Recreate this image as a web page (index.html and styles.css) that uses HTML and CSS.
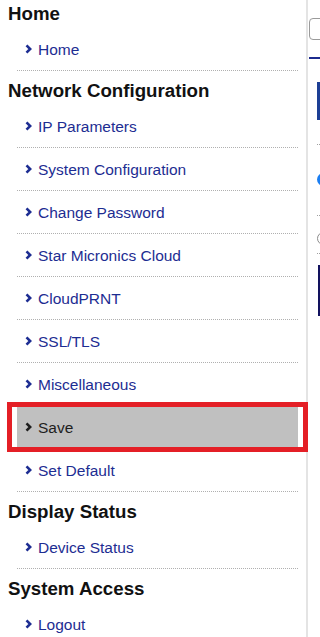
FILE: index.html
```html
<!DOCTYPE html>
<html lang="en">
<head>
    <meta charset="UTF-8">
    <meta name="viewport" content="width=device-width, initial-scale=1.0">
    <title>Star Micronics - Web Configuration</title>
    <link rel="stylesheet" href="styles.css">
</head>
<body>
    <div class="page">
        <nav class="sidebar">
            <h2 class="menu-title">Home</h2>
            <ul class="menu">
                <li class="menu-item"><a href="#"><svg class="chevron" viewBox="0 0 7 10"><path d="M1.5 1.3 L5.2 5 L1.5 8.7"/></svg>Home</a></li>
            </ul>

            <h2 class="menu-title">Network Configuration</h2>
            <ul class="menu">
                <li class="menu-item"><a href="#"><svg class="chevron" viewBox="0 0 7 10"><path d="M1.5 1.3 L5.2 5 L1.5 8.7"/></svg>IP Parameters</a></li>
                <li class="menu-item"><a href="#"><svg class="chevron" viewBox="0 0 7 10"><path d="M1.5 1.3 L5.2 5 L1.5 8.7"/></svg>System Configuration</a></li>
                <li class="menu-item"><a href="#"><svg class="chevron" viewBox="0 0 7 10"><path d="M1.5 1.3 L5.2 5 L1.5 8.7"/></svg>Change Password</a></li>
                <li class="menu-item"><a href="#"><svg class="chevron" viewBox="0 0 7 10"><path d="M1.5 1.3 L5.2 5 L1.5 8.7"/></svg>Star Micronics Cloud</a></li>
                <li class="menu-item"><a href="#"><svg class="chevron" viewBox="0 0 7 10"><path d="M1.5 1.3 L5.2 5 L1.5 8.7"/></svg>CloudPRNT</a></li>
                <li class="menu-item"><a href="#"><svg class="chevron" viewBox="0 0 7 10"><path d="M1.5 1.3 L5.2 5 L1.5 8.7"/></svg>SSL/TLS</a></li>
                <li class="menu-item"><a href="#"><svg class="chevron" viewBox="0 0 7 10"><path d="M1.5 1.3 L5.2 5 L1.5 8.7"/></svg>Miscellaneous</a></li>
                <li class="menu-item active"><a href="#"><svg class="chevron" viewBox="0 0 7 10"><path d="M1.5 1.3 L5.2 5 L1.5 8.7"/></svg>Save</a></li>
                <li class="menu-item"><a href="#"><svg class="chevron" viewBox="0 0 7 10"><path d="M1.5 1.3 L5.2 5 L1.5 8.7"/></svg>Set Default</a></li>
            </ul>

            <h2 class="menu-title">Display Status</h2>
            <ul class="menu">
                <li class="menu-item"><a href="#"><svg class="chevron" viewBox="0 0 7 10"><path d="M1.5 1.3 L5.2 5 L1.5 8.7"/></svg>Device Status</a></li>
            </ul>

            <h2 class="menu-title">System Access</h2>
            <ul class="menu">
                <li class="menu-item"><a href="#"><svg class="chevron" viewBox="0 0 7 10"><path d="M1.5 1.3 L5.2 5 L1.5 8.7"/></svg>Logout</a></li>
            </ul>
        </nav>

        <main class="main">
            <div class="search"></div>
            <div class="tabs"></div>
            <div class="content">
                <div class="save-button"></div>
                <div class="rule"></div>
                <div class="radio checked"></div>
                <div class="rule rule-low"></div>
                <div class="radio"></div>
                <div class="rule rule-short"></div>
                <div class="log-box"></div>
            </div>
        </main>
    </div>
</body>
</html>
```

FILE: styles.css
```css
* {
    margin: 0;
    padding: 0;
    box-sizing: border-box;
}

body {
    font-family: 'Liberation Sans', Arial, Helvetica, sans-serif;
    background: #ffffff;
    overflow: hidden;
}

.page {
    display: flex;
    width: 320px;
    overflow: hidden;
}

/* side menu */

.sidebar {
    flex: 0 0 308px;
    padding: 0 8px;
    border-right: 2px solid #e4e4e4;
}

.menu-title {
    height: 28px;
    margin-top: 6px;
    line-height: 28px;
    font-size: 18.7px;
    font-weight: 700;
    color: #111111;
}

.menu-title:first-child {
    margin-top: 0;
}

.menu {
    list-style: none;
    margin-left: 9px;
}

.menu-item {
    height: 43px;
    border-bottom: 1px dotted #b0b0b0;
}

.menu-item a {
    display: flex;
    align-items: center;
    height: 100%;
    padding: 1px 0 0 8px;
    font-size: 15.5px;
    color: #1d2d92;
    text-decoration: none;
}

.chevron {
    width: 7px;
    height: 10px;
    margin: -2px 6px 0 0;
    fill: none;
    stroke: currentColor;
    stroke-width: 2.6;
}

.menu-item.active {
    position: relative;
    background: #c0c0c0;
}

.menu-item.active a {
    color: #1e1e1e;
}

/* highlight frame drawn over the selected entry */
.menu-item.active::after {
    content: '';
    position: absolute;
    top: -4px;
    bottom: -4px;
    left: -10px;
    right: -10px;
    border: 5px solid #e41f26;
    pointer-events: none;
}

/* main page, cut off at the right edge */

.main {
    flex: 0 0 400px;
    padding: 18px 0 0 1px;
}

.search {
    width: 200px;
    height: 22px;
    border: 1px solid #9a9a9a;
    border-radius: 4px;
}

.tabs {
    margin-top: 17px;
    border-bottom: 2px solid #1c2b8e;
}

.content {
    padding-left: 8px;
}

.save-button {
    width: 80px;
    height: 38px;
    margin-top: 23px;
    background: #1d3f95;
}

.rule {
    margin-top: 24px;
    border-top: 1px dotted #a0a0a0;
}

.rule-low {
    margin-top: 29px;
}

.rule-short {
    margin-top: 8px;
}

.radio {
    width: 13px;
    height: 13px;
    margin-top: 16px;
    border: 1.5px solid #8a8a8a;
    border-radius: 50%;
}

.radio.checked {
    margin-top: 28px;
    border: none;
    background: #1a7ef2;
}

.log-box {
    width: 200px;
    height: 51px;
    margin: 11px 0 0 1px;
    border-left: 2px solid #12125e;
}
```
